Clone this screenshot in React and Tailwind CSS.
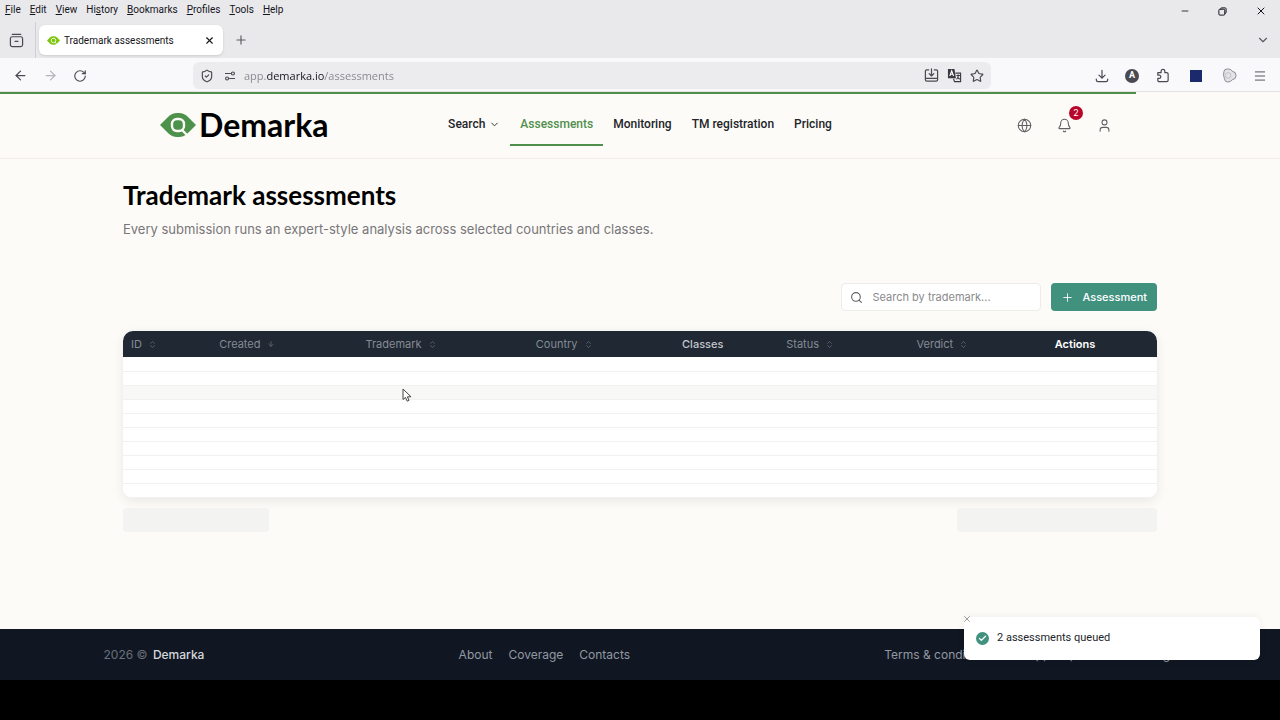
import {
  ArrowDown, ArrowLeft, ArrowRight, Bell, Check, ChevronDown, ChevronsUpDown,
  Globe, Menu, Minus, Plus, RotateCw, Search, ShieldCheck, Star, User, X
} from 'lucide-react';

const MENUS = ['File', 'Edit', 'View', 'History', 'Bookmarks', 'Profiles', 'Tools', 'Help'];
const MNEMONICS = [0, 0, 0, 2, 0, 0, 0, 0];

const COLUMNS = [
  { label: 'ID', width: 'w-[88px]', sort: 'both' },
  { label: 'Created', width: 'w-[146px]', sort: 'down' },
  { label: 'Trademark', width: 'w-[170px]', sort: 'both' },
  { label: 'Country', width: 'w-[146px]', sort: 'both' },
  { label: 'Classes', width: 'w-[104px]', tone: 'font-medium text-[#c3c7ce]' },
  { label: 'Status', width: 'w-[130px]', sort: 'both' },
  { label: 'Verdict', width: 'w-[138px]', sort: 'both' },
  { label: 'Actions', width: 'w-[110px]', tone: 'font-semibold text-white' }
];

function EyeLogo({ className, color }) {
  return (
    <svg viewBox="0 0 36 24" className={className} aria-hidden="true">
      <path d="M0 12 8 4Q12 0 17 0h2q5 0 9 4l8 8-8 8q-4 4-9 4h-2q-5 0-9-4Z" fill={color} />
      <rect x="12" y="6" width="12" height="12" rx="5" fill="none" stroke="#fdfbf7" strokeWidth="2.4" />
      <path d="m21.500 16.500 6 6" stroke="#fdfbf7" strokeWidth="2.4" />
    </svg>
  );
}

function BrowserChrome() {
  return (
    <div className="font-[Roboto,sans-serif] text-[#15141a]">
      <div className="bg-[#e9e9ec]">
        <div className="flex h-[18px] items-center justify-between">
          <div className="flex gap-[9px] pl-[5px] text-[10px]">
            {MENUS.map((name, i) => (
              <button key={name} type="button">
                {name.slice(0, MNEMONICS[i])}
                <span className="underline">{name[MNEMONICS[i]]}</span>
                {name.slice(MNEMONICS[i] + 1)}
              </button>
            ))}
          </div>
          <div className="flex items-center gap-7 pt-1 pr-[13px]">
            <button type="button" aria-label="Minimize"><Minus size={10} strokeWidth={2} /></button>
            <button type="button" aria-label="Restore">
              <svg viewBox="0 0 10 10" width="9" height="9" fill="none" stroke="currentColor" strokeWidth="1.1">
                <rect x="1" y="2.500" width="6.500" height="6.500" rx="1" />
                <path d="M3 2.500V2q0-1 1-1h4q1 0 1 1v4q0 1-1 1h-.5" />
              </svg>
            </button>
            <button type="button" aria-label="Close window"><X size={12} strokeWidth={2} /></button>
          </div>
        </div>
        <div className="flex h-10 items-center pt-1">
          <button type="button" aria-label="Recent browsing" className="flex h-full w-9 items-center justify-center border-r border-[#cfcfd4] pr-0.5">
            <svg viewBox="0 0 16 16" width="15" height="15" fill="none" stroke="#4a4a52" strokeWidth="1.3" strokeLinecap="round">
              <path d="M3.500 1.500h9M6.500 9h3" />
              <rect x="1.500" y="4" width="13" height="10.500" rx="2" />
            </svg>
          </button>
          <div className="ml-[3px] flex h-[30px] w-[184px] items-center gap-1 rounded-md bg-white px-2 shadow-sm">
            <EyeLogo className="h-[9px] w-[13px]" color="#7ac70c" />
            <span className="flex-1 text-[10px]">Trademark assessments</span>
            <button type="button" aria-label="Close tab"><X size={11} strokeWidth={2.400} /></button>
          </div>
          <button type="button" aria-label="New tab" className="ml-[11px] text-[#5b5b66]"><Plus size={14} strokeWidth={2} /></button>
          <button type="button" aria-label="List all tabs" className="mr-2.5 ml-auto text-[#5b5b66]"><ChevronDown size={14} /></button>
        </div>
      </div>
      <div className="flex h-[33px] items-center bg-[#f9f9fb] pt-0.5 text-[#4a4a52]">
        <div className="flex w-[193px] items-center gap-[15px] pl-[13px]">
          <button type="button" aria-label="Back"><ArrowLeft size={15} /></button>
          <button type="button" aria-label="Forward" className="text-[#b5b5bb]"><ArrowRight size={15} /></button>
          <button type="button" aria-label="Reload"><RotateCw size={14} /></button>
        </div>
        <div className="flex h-[27px] max-w-[798px] flex-1 items-center rounded-md bg-[#ececee] px-[7px]">
          <ShieldCheck size={14} />
          <svg viewBox="0 0 14 12" width="12" height="10" fill="none" stroke="currentColor" strokeWidth="1.4" className="ml-2.5">
            <path d="M1 3h7M6 9h7" />
            <circle cx="10.500" cy="3" r="1.800" />
            <circle cx="3.500" cy="9" r="1.800" />
          </svg>
          <input
            aria-label="Address"
            defaultValue="app.demarka.io/assessments"
            className="ml-2 h-5 min-w-0 flex-1 bg-[linear-gradient(to_right,#85858e_22px,#15141a_22px,#15141a_80px,#85858e_80px)] bg-clip-text font-['Open_Sans',sans-serif] text-[11px] text-transparent caret-black outline-none"
          />
          <div className="flex items-center gap-2">
            <button type="button" aria-label="Install page">
              <svg viewBox="0 0 16 16" width="15" height="15" fill="none" stroke="currentColor" strokeWidth="1.3" strokeLinecap="round" strokeLinejoin="round">
                <path d="M5 2H3Q1.500 2 1.500 3.500v9Q1.500 14 3 14h10q1.500 0 1.500-1.500v-9Q14.500 2 13 2h-2M8 1v7M5.500 6 8 8.500 10.500 6M2 11h12" />
              </svg>
            </button>
            <button type="button" aria-label="Translate page">
              <svg viewBox="0 0 16 16" width="15" height="15" fill="none" strokeWidth="1.2">
                <path d="M1 1h7l1.500 10H1Z" fill="#3a3a42" />
                <path d="m3 8.500 2-5.500 2 5.500M3.700 6.700h2.600" stroke="white" />
                <path d="M9 5.500h5.500v9H8l-1-3M10 8h4M12 7v1q0 3-2 4M11 9.500l2.500 2.500" stroke="#3a3a42" />
              </svg>
            </button>
            <button type="button" aria-label="Bookmark this page"><Star size={14} /></button>
          </div>
        </div>
        <div className="ml-auto flex items-center gap-4 pr-[13px]">
          <button type="button" aria-label="Downloads">
            <svg viewBox="0 0 16 16" width="14" height="14" fill="none" stroke="currentColor" strokeWidth="1.4" strokeLinecap="round" strokeLinejoin="round">
              <path d="M8 1.500v9M4.500 7 8 10.500 11.500 7M1.500 11.500v1q0 2 2 2h9q2 0 2-2v-1" />
            </svg>
          </button>
          <button type="button" className="flex size-[14px] items-center justify-center rounded-full bg-[#4a4a52] text-[9px] font-bold text-white">A</button>
          <button type="button" aria-label="Extensions">
            <svg viewBox="0 0 16 16" width="15" height="15" fill="none" stroke="currentColor" strokeWidth="1.3" strokeLinejoin="round">
              <path d="M3 5h3.500V3.500a2 2 0 0 1 4 0V5h2Q14 5 14 6.500v6.500q0 1.500-1.500 1.500h-8Q3 14.500 3 13v-2h1.500a1.700 1.700 0 0 0 0-3.400H3Z" />
            </svg>
          </button>
          <button type="button" aria-label="Side panel" className="mx-1 size-3 bg-[#1b2a6b]" />
          <button type="button" aria-label="Groups">
            <svg viewBox="0 0 16 16" width="15" height="15" fill="#e4e4e7" stroke="#85858e" strokeWidth="1">
              <path d="M2 4q0-3 4-3 4 0 5 2.500 4 .5 4 4.500t-4 4.500Q9 15 6 15q-3 0-3.500-4Q1 8 2 4Z" />
              <circle cx="6.500" cy="8" r="3" fill="none" strokeWidth=".4" />
            </svg>
          </button>
          <button type="button" aria-label="Open menu"><Menu size={14} strokeWidth={1.600} /></button>
        </div>
      </div>
    </div>
  );
}

function SiteHeader() {
  return (
    <header className="border-b border-[#f1eee8]">
      <div className="h-[3px] border-t border-[#e3e3e6]">
        <div className="h-0.5 w-[88.75%] bg-[#4f8f4b]" />
      </div>
      <div className="mx-auto grid h-16 max-w-[960px] grid-cols-[1fr_auto_1fr] items-center pb-[2px]">
        <a href="#home" className="flex items-center gap-[3px] font-[Lato,sans-serif] text-[32px] leading-8 font-bold text-black">
          <EyeLogo className="h-6 w-9" color="#4c924a" />
          Demarka
        </a>
        <nav className="flex font-[Roboto,sans-serif] text-xs leading-4 font-medium text-[#22252a]">
          <a href="#search" className="flex items-center gap-1 border-b-2 border-transparent px-2.5 py-3">Search <ChevronDown size={11} /></a>
          <a href="#assessments" className="border-b-2 border-[#4f8f4b] px-2.5 py-3 text-[#4f8f4b]">Assessments</a>
          <a href="#monitoring" className="border-b-2 border-transparent px-2.5 py-3">Monitoring</a>
          <a href="#registration" className="border-b-2 border-transparent px-2.5 py-3">TM registration</a>
          <a href="#pricing" className="border-b-2 border-transparent px-2.5 py-3">Pricing</a>
        </nav>
        <div className="flex items-center justify-end gap-[25px] pr-2 text-[#5f6064]">
          <button type="button" aria-label="Language"><Globe size={15} strokeWidth={1.700} /></button>
          <button type="button" aria-label="Notifications" className="relative">
            <Bell size={15} strokeWidth={1.700} />
            <span className="absolute -top-3 left-3 flex size-[14px] items-center justify-center rounded-full bg-[#b8062b] text-[9px] text-white">2</span>
          </button>
          <button type="button" aria-label="Account"><User size={15} strokeWidth={1.700} /></button>
        </div>
      </div>
    </header>
  );
}

function AssessmentsTable() {
  return (
    <div className="mt-5 overflow-hidden rounded-[10px] bg-white shadow-[0_3px_12px_rgba(0,0,0,0.08)]">
      <table className="w-full table-fixed text-left">
        <thead className="bg-[#202833] text-[11px] leading-4 text-[#858b95]">
          <tr>
            {COLUMNS.map(({ label, width, sort, tone }) => (
              <th key={label} className={`${width} h-[26px] px-2 ${tone || 'font-normal'}`}>
                <span className="flex items-center gap-1.5">
                  {label}
                  {sort === 'both' && <ChevronsUpDown size={9} className="opacity-70" />}
                  {sort === 'down' && <ArrowDown size={8} className="opacity-80" />}
                </span>
              </th>
            ))}
          </tr>
        </thead>
        <tbody>
          {Array.from({ length: 10 }, (_, row) => (
            <tr key={row} className={row === 2 ? 'bg-[#f8f8f7]' : 'bg-white'}>
              {COLUMNS.map(({ label }) => (
                <td key={label} className="h-[14px] border-b border-[#f1f1f1]" />
              ))}
            </tr>
          ))}
        </tbody>
      </table>
    </div>
  );
}

function Toast() {
  return (
    <div role="status" className="absolute right-5 bottom-[60px] flex h-[43px] w-[296px] items-center gap-2 rounded-md bg-white px-3 font-[Roboto,sans-serif] text-[11px] text-[#22252a] shadow-[0_0_8px_rgba(0,0,0,0.06)]">
      <button type="button" aria-label="Dismiss" className="absolute -top-[3px] -left-0.5 text-[#6b6b6b]"><X size={10} strokeWidth={1.600} /></button>
      <span className="flex size-[13px] items-center justify-center rounded-full bg-[#41917f] text-white"><Check size={9} strokeWidth={3.500} /></span>
      2 assessments queued
    </div>
  );
}

export default function App() {
  return (
    <div className="relative flex min-h-screen flex-col overflow-hidden bg-[#fdfbf7] font-[Inter,sans-serif]">
      <BrowserChrome />
      <SiteHeader />
      <main className="mx-auto w-full max-w-[1034px] flex-1 pt-5">
        <h1 className="font-[Lato,sans-serif] text-[26px] leading-8 font-bold text-black">Trademark assessments</h1>
        <p className="mt-2 text-[13px] leading-5 text-[#77777a]">
          Every submission runs an expert-style analysis across selected countries and classes.
        </p>
        <div className="mt-11 flex justify-end gap-2.5 text-[11px]">
          <div className="flex h-7 w-[200px] items-center gap-[9px] rounded border border-[#eeece8] bg-white px-2">
            <Search size={13} className="text-[#5f6064]" />
            <input type="search" aria-label="Search by trademark" placeholder="Search by trademark..." className="h-5 min-w-0 flex-1 outline-none placeholder:text-[#8a8a8d]" />
          </div>
          <button type="button" className="flex h-7 items-center gap-2 rounded bg-[#41917f] px-2.5 font-medium text-white">
            <Plus size={13} strokeWidth={1.600} /> Assessment
          </button>
        </div>
        <AssessmentsTable />
        <div className="mt-2.5 flex justify-between">
          <div className="h-6 w-[146px] rounded bg-[#f3f3f2]" />
          <div className="h-6 w-[200px] rounded bg-[#f3f3f2]" />
        </div>
      </main>
      <footer className="bg-[#101722] text-xs text-[#9298a3]">
        <div className="mx-auto flex h-[51px] max-w-[1073px] items-center justify-between">
          <p className="text-[#6a707b]">2026 © <a href="#home" className="ml-0.5 font-medium text-[#d5d8dd]">Demarka</a></p>
          <nav className="flex gap-4">
            <a href="#about">About</a>
            <a href="#coverage">Coverage</a>
            <a href="#contacts">Contacts</a>
          </nav>
          <nav className="flex gap-7 whitespace-nowrap">
            <a href="#terms">Terms &amp; conditions</a>
            <a href="#support">Support portal</a>
            <a href="#settings">Settings</a>
          </nav>
        </div>
      </footer>
      <div className="h-10 bg-black" />
      <Toast />
      <svg viewBox="0 0 10 14" className="pointer-events-none absolute top-[388px] left-[402px] h-[14px] w-[10px]" aria-hidden="true">
        <path d="M1 1v10.500l2.500-2 1.700 3.700 1.800-.8L5.400 8.800H9Z" fill="white" stroke="#444" strokeWidth="1" />
      </svg>
    </div>
  );
}
